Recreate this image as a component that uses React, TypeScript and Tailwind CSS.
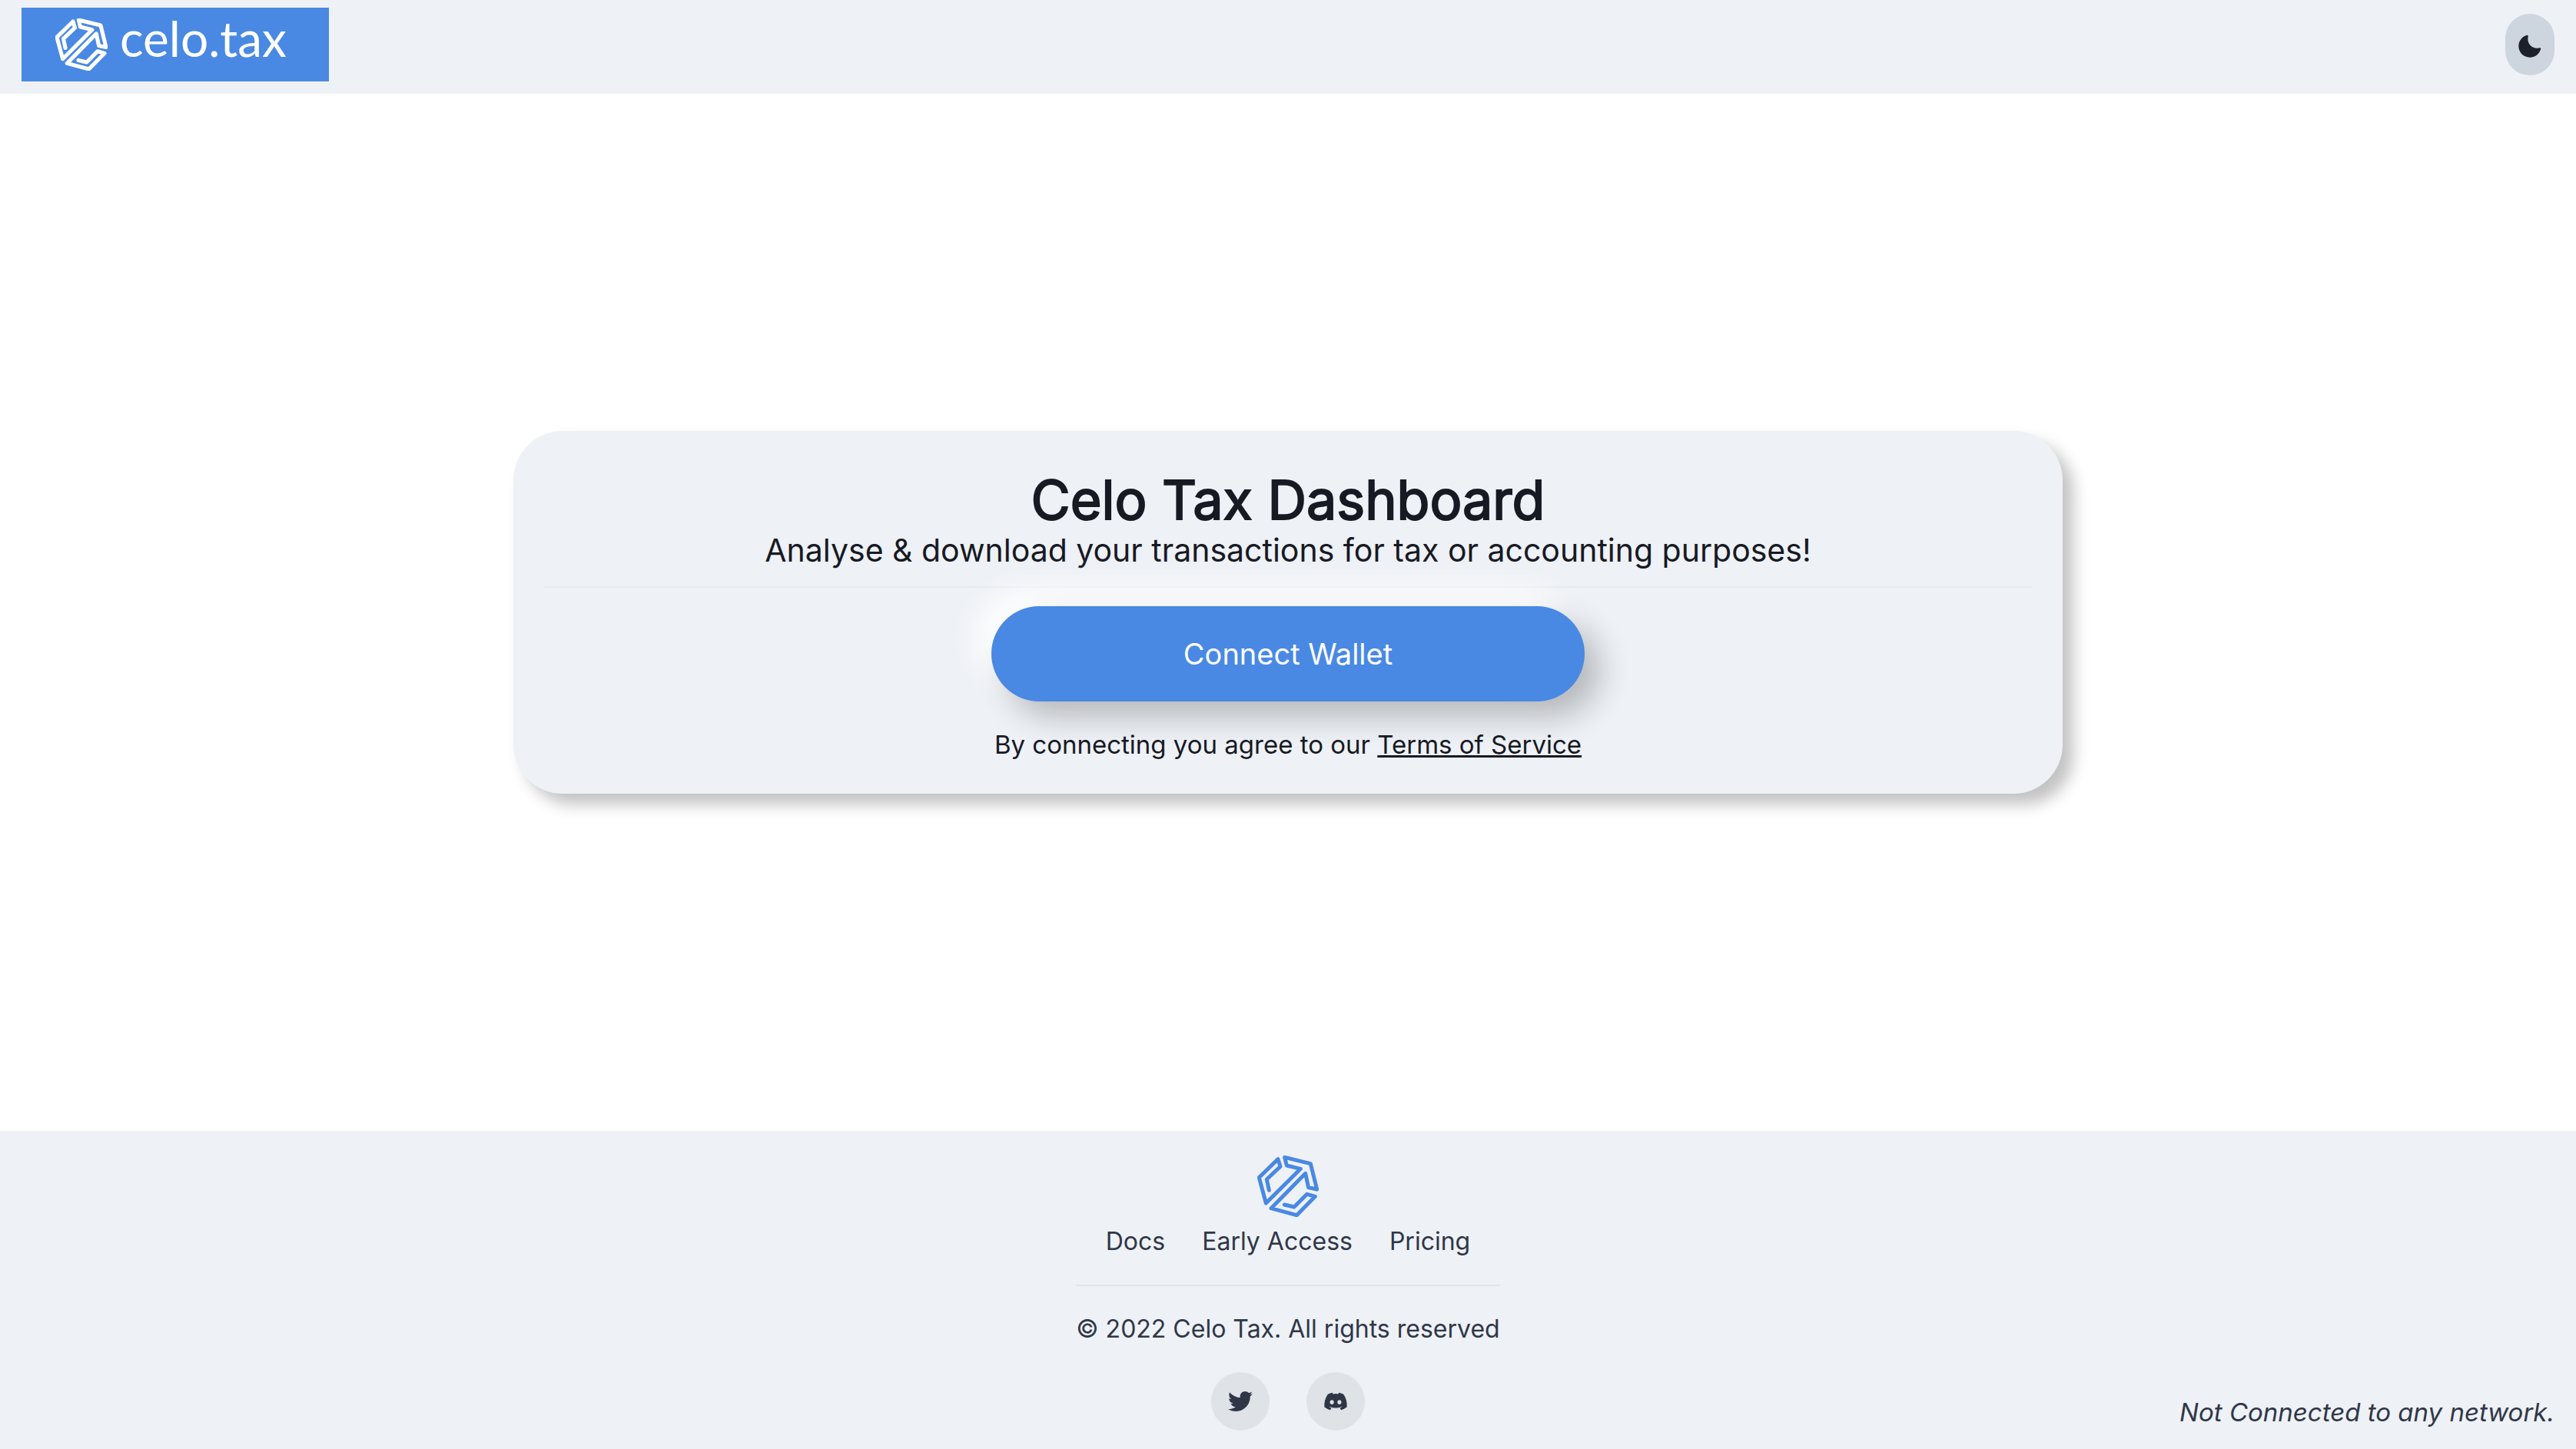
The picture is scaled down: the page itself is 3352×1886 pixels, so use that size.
import { FaDiscord, FaTwitter } from "react-icons/fa";

const MARK_POINTS =
  "46,136 37,93 90,43 81,14 7,86 34,186 169,52 115,39 107,7 208,32 233,132 200,125 188,70 54,206 154,233 226,160 194,151 144,201 106,192";

function Mark({ className, strokeWidth }: { className: string; strokeWidth: number }) {
  return (
    <svg viewBox="0 0 240 240" fill="none" className={className} aria-hidden="true">
      <polyline
        points={MARK_POINTS}
        stroke="currentColor"
        strokeWidth={strokeWidth}
        strokeLinejoin="round"
        strokeLinecap="round"
      />
    </svg>
  );
}

function MoonIcon() {
  return (
    <svg viewBox="0 0 24 24" fill="currentColor" className="size-8" aria-hidden="true">
      <path d="M21.4,13.7C20.6,13.9,19.8,14,19,14c-5,0-9-4-9-9c0-0.8,0.1-1.6,0.3-2.4c0.1-0.3,0-0.7-0.3-1c-0.3-0.3-0.6-0.4-1-0.3C4.3,2.7,1,7.1,1,12c0,6.1,4.9,11,11,11c4.9,0,9.3-3.3,10.6-8.1c0.1-0.3,0-0.7-0.3-1C22.1,13.7,21.7,13.6,21.4,13.7z" />
    </svg>
  );
}

const footerLinks = ["Docs", "Early Access", "Pricing"];

export default function App() {
  return (
    <div className="flex min-h-screen flex-col bg-white font-['Inter',sans-serif] text-[32px] leading-12 text-[#171923]">
      <header className="flex items-center justify-between bg-[#eef1f6] px-7 pt-2.5 pb-4">
        <a
          href="#"
          className="flex h-24 w-100 items-start bg-[#4989e3] pt-3.5 pl-11 text-white"
        >
          <Mark className="size-17" strokeWidth={18} />
          <span className="ml-4 font-['Lato',sans-serif] text-[64px] leading-13">celo.tax</span>
        </a>
        <button
          type="button"
          aria-label="Switch to dark mode"
          className="flex h-20 w-16 items-center justify-center rounded-full bg-[#cdd5df] pt-1 text-[#1b202b]"
        >
          <MoonIcon />
        </button>
      </header>

      <main className="flex grow items-center justify-center">
        <section className="flex w-[2016px] max-w-full flex-col items-center rounded-[64px] bg-[#eef1f6] px-10 pt-12 pb-10 shadow-[14px_14px_20px_rgba(0,0,0,0.24)]">
          <h1 className="text-[70px] leading-[84px] font-normal [-webkit-text-stroke:2px_#171923]">
            Celo Tax Dashboard
          </h1>
          <p className="text-[41px] leading-[46px]">
            Analyse &amp; download your transactions for tax or accounting purposes!
          </p>
          <hr className="mt-6 w-full border-t-2 border-[#e7eaee]" />
          <div className="mt-6 flex w-[772px] max-w-full flex-col">
            <button
              type="button"
              className="h-31 rounded-full bg-[#4989e3] text-[38px] text-white shadow-[20px_20px_40px_rgba(0,0,0,0.24),-20px_-20px_40px_#ffffff]"
            >
              Connect Wallet
            </button>
            <p className="mt-8 text-center text-[33px]">
              By connecting you agree to our{" "}
              <a href="#" className="underline">
                Terms of Service
              </a>
            </p>
          </div>
        </section>
      </main>

      <footer className="grid grid-cols-[1fr_auto_1fr] items-end bg-[#eef1f6] px-7 pt-8 pb-6 text-[#2f3747]">
        <div className="col-start-2 flex flex-col items-center">
          <Mark className="size-20 text-[#4989e3]" strokeWidth={15} />
          <nav className="mt-2 flex gap-12">
            {footerLinks.map((label) => (
              <a key={label} href="#">
                {label}
              </a>
            ))}
          </nav>
          <hr className="mt-8 w-full border-t-2 border-[#e2e6eb]" />
          <p className="mt-8">© 2022 Celo Tax. All rights reserved</p>
          <div className="mt-8 flex gap-12">
            <a
              href="#"
              aria-label="Twitter"
              className="flex size-19 items-center justify-center rounded-full bg-[#dfe2e7]"
            >
              <FaTwitter className="size-8" />
            </a>
            <a
              href="#"
              aria-label="Discord"
              className="flex size-19 items-center justify-center rounded-full bg-[#dfe2e7]"
            >
              <FaDiscord className="size-8" />
            </a>
          </div>
        </div>
        <p className="justify-self-end text-[33px] italic">Not Connected to any network.</p>
      </footer>
    </div>
  );
}
